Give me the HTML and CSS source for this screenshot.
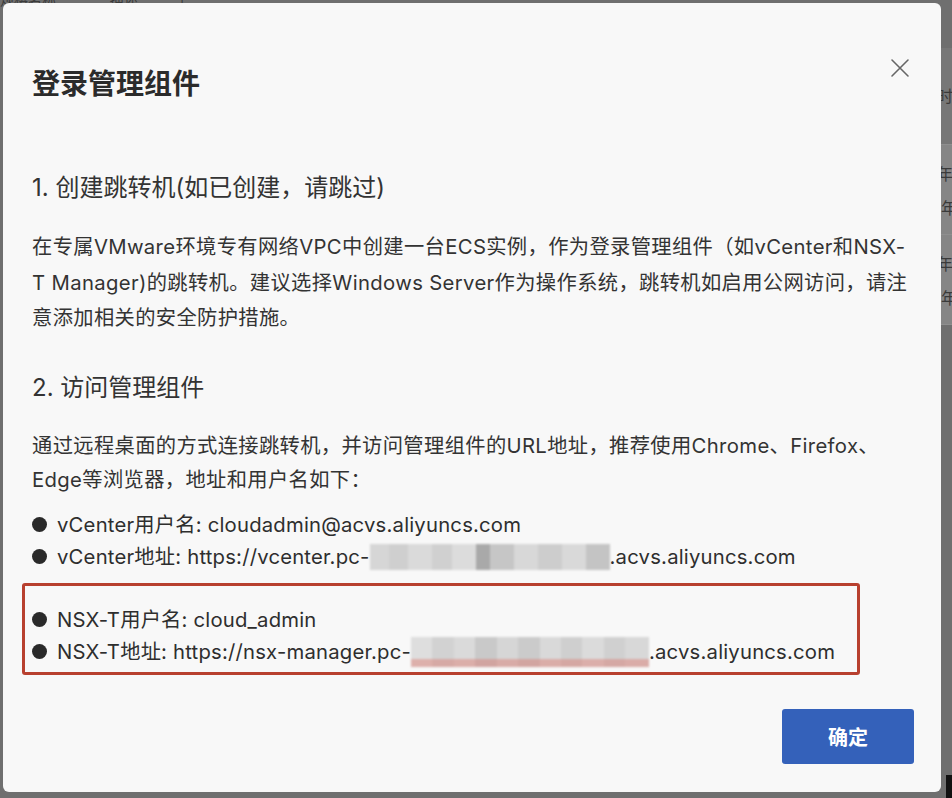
FILE: index.html
```html
<!DOCTYPE html>
<html lang="zh-CN">
<head>
<meta charset="utf-8">
<title>登录管理组件</title>
<link rel="stylesheet" href="styles.css">
</head>
<body>
<div class="backdrop">
  <div class="bg-top">规格名称　　　&nbsp;&nbsp;&nbsp;描述　　　|</div>
  <div class="bg-side">
    <div class="bg-head">时</div>
    <div class="bg-row">年<br>年</div>
    <div class="bg-row">年<br>年</div>
  </div>
  <div class="bg-corner"></div>
</div>

<div class="modal">
  <div class="modal-header">
    <h1 class="modal-title">登录管理组件</h1>
    <button class="close" aria-label="关闭">
      <svg width="20" height="20" viewBox="0 0 20 20"><path d="M2 2L18 18M18 2L2 18" stroke="#666" stroke-width="1.6" fill="none" stroke-linecap="round"/></svg>
    </button>
  </div>

  <div class="modal-body">
    <h2 class="step step-1">1. 创建跳转机(如已创建，请跳过)</h2>
    <p class="para para-1">在专属VMware环境专有网络VPC中创建一台ECS实例，作为登录管理组件（如vCenter和NSX-<br>T Manager)的跳转机。建议选择Windows Server作为操作系统，跳转机如启用公网访问，请注<br>意添加相关的安全防护措施。</p>

    <h2 class="step step-2">2. 访问管理组件</h2>
    <p class="para para-2">通过远程桌面的方式连接跳转机，并访问管理组件的URL地址，推荐使用Chrome、Firefox、<br>Edge等浏览器，地址和用户名如下：</p>

    <ul class="list">
      <li><span class="dot"></span>vCenter用户名: cloudadmin@acvs.aliyuncs.com</li>
      <li><span class="dot"></span>vCenter地址: https://vcenter.pc-<span class="redact redact-a"></span>.acvs.aliyuncs.com</li>
    </ul>

    <ul class="list highlight">
      <li><span class="dot"></span>NSX-T用户名: cloud_admin</li>
      <li><span class="dot"></span>NSX-T地址: https://nsx-manager.pc-<span class="redact redact-b"></span>.acvs.aliyuncs.com</li>
    </ul>
  </div>

  <div class="modal-footer">
    <button class="btn-primary">确定</button>
  </div>
</div>
</body>
</html>
```
FILE: styles.css
```css
html, body {
  margin: 0;
  padding: 0;
}
body {
  width: 952px;
  height: 798px;
  overflow: hidden;
  background: #6f6f6f;
  font-family: Inter, "Noto Sans CJK SC", sans-serif;
  color: #333;
  position: relative;
}

/* background page seen through the overlay */
.backdrop {
  position: absolute;
  inset: 0;
}
.bg-top {
  position: absolute;
  left: 0;
  top: -11px;
  height: 16px;
  font-size: 14px;
  color: #3a3a3a;
  white-space: nowrap;
}
.bg-side {
  position: absolute;
  left: 941px;
  top: 48px;
  width: 11px;
  display: flex;
  flex-direction: column;
  font-size: 16px;
  color: #3a3a3a;
  background: #7b7b7b;
  overflow: hidden;
}
.bg-head {
  height: 96px;
  line-height: 96px;
  border-bottom: 1px solid #8f8f8f;
  background: #777;
  text-indent: -4px;
}
.bg-row {
  height: 90px;
  padding-top: 12px;
  box-sizing: border-box;
  line-height: 34px;
  border-bottom: 1px solid #8f8f8f;
  background: #868686;
  text-indent: -4px;
}
.bg-corner {
  position: absolute;
  left: 946px;
  top: 775px;
  width: 6px;
  height: 23px;
  background: #111;
}

/* dialog */
.modal {
  position: absolute;
  left: 3px;
  top: 3px;
  width: 938px;
  height: 789px;
  box-sizing: border-box;
  background: #f8f8f8;
  border-radius: 6px;
  padding: 0 28px 0 29px;
  display: flex;
  flex-direction: column;
}

.modal-header {
  display: flex;
  justify-content: space-between;
  align-items: flex-start;
  padding-top: 59px;
}
.modal-title {
  margin: 0;
  font-size: 28px;
  line-height: 40px;
  font-weight: 700;
  color: #2b2b2b;
  font-family: "Noto Sans CJK SC", sans-serif;
}
.close {
  border: 0;
  background: transparent;
  padding: 0;
  margin: -4px 3px 0 0;
  width: 20px;
  height: 20px;
  cursor: pointer;
}

.modal-body {
  flex: 1;
}
.step {
  margin: 0;
  font-size: 24px;
  line-height: 32px;
  font-weight: 400;
  color: #333;
}
.step-1 { margin-top: 70px; }
.step-2 { margin-top: 36px; }

.para {
  margin: 25px 0 0;
  font-size: 20.3px;
  letter-spacing: 0.35px;
  color: #333;
  white-space: nowrap;
}
.para-1 { line-height: 35.5px; }
.para-2 { line-height: 34px; }

.list {
  list-style: none;
  margin: 12px 0 0;
  padding: 0;
  font-size: 20.3px;
  letter-spacing: 0.2px;
  line-height: 32px;
  color: #2e2e2e;
}
.list li {
  display: flex;
  align-items: center;
  white-space: nowrap;
}
.dot {
  width: 15px;
  height: 15px;
  border-radius: 50%;
  background: #2a2a2a;
  margin-right: 10px;
  flex: none;
}
.highlight {
  margin: 10px 0 0 -10px;
  width: 838px;
  box-sizing: border-box;
  border: 3px solid #b8402f;
  border-radius: 3px;
  padding: 18px 7px 4px;
}

.redact {
  display: inline-block;
  height: 26px;
  vertical-align: middle;
  filter: blur(1.2px);
}
.redact-a {
  width: 240px;
  background:
    linear-gradient(90deg,
      #d6d6d6 0 8%, #cfcfcf 8% 16%, #dadada 16% 26%, #d0d0d0 26% 34%,
      #dcdcdc 34% 44%, #a9a9a9 44% 50%, #c6c6c6 50% 60%, #d8d8d8 60% 70%,
      #cdcdcd 70% 80%, #d9d9d9 80% 90%, #c4c4c4 90% 100%);
}
.redact-b {
  width: 238px;
  height: 30px;
  background:
    linear-gradient(180deg, transparent 0 75%, rgba(220,120,110,0.45) 75% 100%),
    linear-gradient(90deg,
      #dedede 0 9%, #d2d2d2 9% 18%, #dadada 18% 27%, #c9c9c9 27% 36%,
      #d6d6d6 36% 45%, #cbcbcb 45% 54%, #d9d9d9 54% 63%, #cfcfcf 63% 72%,
      #dbdbdb 72% 81%, #d0d0d0 81% 90%, #d8d8d8 90% 100%);
}

.modal-footer {
  display: flex;
  justify-content: flex-end;
  padding-bottom: 28px;
}
.btn-primary {
  width: 132px;
  height: 55px;
  border: 0;
  border-radius: 3px;
  background: #3461ba;
  color: #fff;
  font-family: "Noto Sans CJK SC", sans-serif;
  font-size: 20px;
  font-weight: 700;
  margin-right: -1px;
  cursor: pointer;
}
```
